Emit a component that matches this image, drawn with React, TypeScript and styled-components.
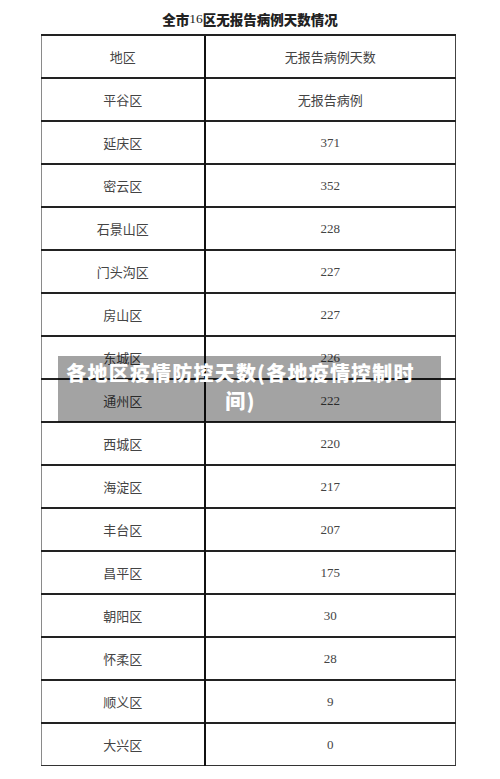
import styled, { createGlobalStyle } from 'styled-components';

const rows: [string, string][] = [
  ['平谷区', '无报告病例'],
  ['延庆区', '371'],
  ['密云区', '352'],
  ['石景山区', '228'],
  ['门头沟区', '227'],
  ['房山区', '227'],
  ['东城区', '226'],
  ['通州区', '222'],
  ['西城区', '220'],
  ['海淀区', '217'],
  ['丰台区', '207'],
  ['昌平区', '175'],
  ['朝阳区', '30'],
  ['怀柔区', '28'],
  ['顺义区', '9'],
  ['大兴区', '0'],
];

export default function App() {
  return (
    <>
      <GlobalStyle />
      <Page>
        <Title>
          全市<Num>16</Num>区无报告病例天数情况
        </Title>
        <TableWrap>
          <Table>
            <colgroup>
              <col style={{ width: 163 }} />
              <col />
            </colgroup>
            <tbody>
              <tr>
                <Cell>地区</Cell>
                <Cell>无报告病例天数</Cell>
              </tr>
              {rows.map(([area, days]) => (
                <tr key={area}>
                  <Cell>{area}</Cell>
                  <Cell $serif={/^\d+$/.test(days)}>{days}</Cell>
                </tr>
              ))}
            </tbody>
          </Table>
          <Caption>各地区疫情防控天数(各地疫情控制时间)</Caption>
        </TableWrap>
      </Page>
    </>
  );
}

const GlobalStyle = createGlobalStyle`
  html, body {
    margin: 0;
    padding: 0;
    background: #ffffff;
  }
`;

const Page = styled.main`
  width: 500px;
  height: 779px;
  overflow: hidden;
  font-family: 'Noto Sans CJK SC', 'Noto Sans', sans-serif;
`;

const Title = styled.h1`
  margin: 0;
  height: 34px;
  padding-top: 3px;
  box-sizing: border-box;
  display: flex;
  align-items: center;
  justify-content: center;
  font-size: 13.5px;
  font-weight: 900;
  color: #222;
`;

const Num = styled.span`
  font-family: 'Liberation Serif', serif;
  font-weight: 400;
  font-size: 13.5px;
`;

const TableWrap = styled.div`
  position: relative;
  margin-left: 41px;
  width: 415px;
`;

const Table = styled.table`
  width: 100%;
  border-collapse: collapse;
  table-layout: fixed;
  border-top: 1.5px solid #333;
  border-right: 1.5px solid #444;
  border-bottom: 1.5px solid #333;
  border-left: 1.5px solid #8a8a8a;
`;

const Cell = styled.td<{ $serif?: boolean }>`
  height: 41px;
  padding: 0;
  text-align: center;
  vertical-align: middle;
  border-top: 2px solid #222;
  font-size: 13px;
  color: #444;
  font-family: ${(p) =>
    p.$serif ? "'Liberation Serif', serif" : "'Noto Sans CJK SC', sans-serif"};

  & + & {
    border-left: 2px solid #111;
  }
`;

const Caption = styled.div`
  position: absolute;
  left: 17px;
  top: 322px;
  width: 383px;
  height: 66px;
  box-sizing: border-box;
  padding: 3px 22px 0 4px;
  background: rgba(0, 0, 0, 0.36);
  color: #fff;
  font-family: 'Noto Sans CJK SC', sans-serif;
  font-size: 20px;
  font-weight: 900;
  letter-spacing: 1.2px;
  line-height: 28px;
  text-align: center;
`;
